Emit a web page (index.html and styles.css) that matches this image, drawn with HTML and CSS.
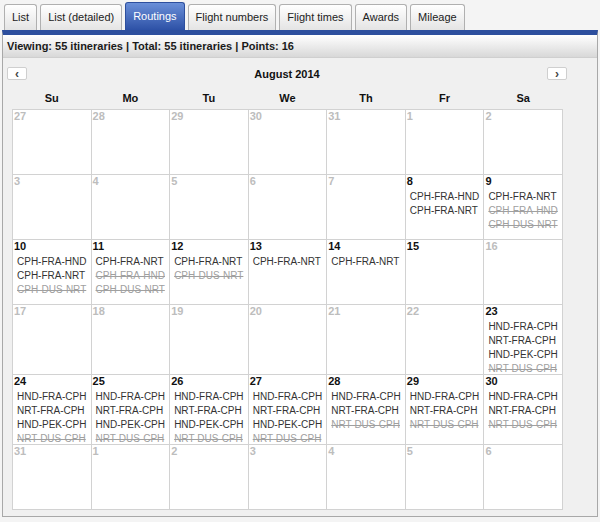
FILE: index.html
```html
<!DOCTYPE html>
<html>
<head>
    <meta charset="UTF-8">
    <link rel="stylesheet" href="styles.css">
</head>
<body>
    <div class="tabs">
        <div class="tab">List</div>
        <div class="tab">List (detailed)</div>
        <div class="tab active">Routings</div>
        <div class="tab">Flight numbers</div>
        <div class="tab">Flight times</div>
        <div class="tab">Awards</div>
        <div class="tab">Mileage</div>
    </div>
    <div class="panel">
        <div class="panel-head">Viewing: 55 itineraries | Total: 55 itineraries | Points: 16</div>
        <div class="calendar">
            <div class="cal-nav">
                <button class="nav-btn">&lsaquo;</button>
                <div class="cal-title">August 2014</div>
                <button class="nav-btn">&rsaquo;</button>
            </div>
            <table class="cal-grid">
                <thead>
                    <tr><th>Su</th><th>Mo</th><th>Tu</th><th>We</th><th>Th</th><th>Fr</th><th>Sa</th></tr>
                </thead>
                <tbody id="cal-body"></tbody>
            </table>
        </div>
    </div>

    <script>
        var A = "HND-FRA-CPH", B = "NRT-FRA-CPH", C = "HND-PEK-CPH", D = "~NRT-DUS-CPH";
        var routes = {
            8: ["CPH-FRA-HND", "CPH-FRA-NRT"],
            9: ["CPH-FRA-NRT", "~CPH-FRA-HND", "~CPH-DUS-NRT"],
            10: ["CPH-FRA-HND", "CPH-FRA-NRT", "~CPH-DUS-NRT"],
            11: ["CPH-FRA-NRT", "~CPH-FRA-HND", "~CPH-DUS-NRT"],
            12: ["CPH-FRA-NRT", "~CPH-DUS-NRT"],
            13: ["CPH-FRA-NRT"],
            14: ["CPH-FRA-NRT"],
            15: [],
            23: [A, B, C, D], 24: [A, B, C, D], 25: [A, B, C, D], 26: [A, B, C, D], 27: [A, B, C, D],
            28: [A, B, D], 29: [A, B, D], 30: [A, B, D]
        };

        // 27 Jul .. 6 Sep
        var days = [27, 28, 29, 30, 31];
        for (var i = 1; i <= 31; i++) days.push(i);
        for (var j = 1; j <= 6; j++) days.push(j);

        var body = document.getElementById("cal-body");
        var row;
        days.forEach(function(d, idx) {
            if (idx % 7 === 0) {
                row = document.createElement("tr");
                body.appendChild(row);
            }
            var inMonth = idx >= 5 && idx < 36;
            var list = inMonth ? routes[d] : null;
            var td = document.createElement("td");
            var num = document.createElement("div");
            num.className = "day-num" + (list ? "" : " off");
            num.textContent = d;
            td.appendChild(num);
            (list || []).forEach(function(r) {
                var line = document.createElement("div");
                line.className = "route";
                if (r.charAt(0) === "~") {
                    line.className += " cancelled";
                    r = r.slice(1);
                }
                line.textContent = r;
                td.appendChild(line);
            });
            row.appendChild(td);
        });
    </script>
</body>
</html>
```

FILE: styles.css
```css
body {
    margin: 0;
    font-family: "Liberation Sans", Arial, sans-serif;
    background-color: #f4f4f4;
    color: #222;
}
.tabs {
    display: flex;
    align-items: flex-end;
    gap: 3px;
    padding: 3px 0 0 4px;
    height: 27px;
}
.tab {
    height: 25px;
    line-height: 25px;
    padding: 0 7px;
    font-size: 11px;
    color: #222;
    background: linear-gradient(#ffffff, #e4e4e4);
    border: 1px solid #b0b0b0;
    border-bottom: none;
    border-radius: 3px 3px 0 0;
}
.tab.active {
    height: 27px;
    line-height: 27px;
    color: #fff;
    background: linear-gradient(#6a8fd8, #2d51a6);
    border-color: #2d4f9e;
}
.panel {
    margin: 0 2px;
    border: 1px solid #a8a8a8;
    border-top: 5px solid #2d4f9e;
    background-color: #f0f0f0;
    padding-bottom: 6px;
}
.panel-head {
    height: 22px;
    line-height: 22px;
    padding-left: 4px;
    font-size: 11px;
    font-weight: bold;
    color: #1a1a1a;
    background: linear-gradient(#ffffff, #d8d8d8);
    border-bottom: 1px solid #cfcfcf;
}
.calendar {
    width: 560px;
    margin-left: 4px;
}
.cal-nav {
    display: flex;
    justify-content: space-between;
    align-items: center;
    margin-top: 8px;
    height: 15px;
}
.nav-btn {
    width: 20px;
    height: 13px;
    padding: 0;
    font-family: "Liberation Sans", Arial, sans-serif;
    font-size: 12px;
    font-weight: bold;
    line-height: 10px;
    color: #444;
    background: #fff;
    border: 1px solid #cfcfcf;
    border-radius: 2px;
}
.cal-title {
    font-size: 11px;
    font-weight: bold;
    color: #111;
}
.cal-grid {
    border-collapse: collapse;
    table-layout: fixed;
    width: 551px;
    margin: 8px 0 0 5px;
}
.cal-grid th {
    font-size: 11px;
    font-weight: bold;
    color: #111;
    height: 17px;
    padding: 0 0 3px;
    vertical-align: middle;
}
.cal-grid td {
    height: 64px;
    padding: 0;
    vertical-align: top;
    background-color: #fff;
    border: 1px solid #d2d2d2;
}
.day-num {
    font-size: 11px;
    font-weight: bold;
    line-height: 13px;
    padding-left: 1px;
    margin-bottom: 2px;
    color: #111;
}
.day-num.off {
    color: #bdbdbd;
}
.route {
    font-size: 10px;
    line-height: 14px;
    padding-left: 4px;
    color: #333;
    white-space: nowrap;
}
.route:last-child {
    margin-bottom: -2px;
}
.route.cancelled {
    color: #a0a0a0;
    text-decoration: line-through;
}
```
